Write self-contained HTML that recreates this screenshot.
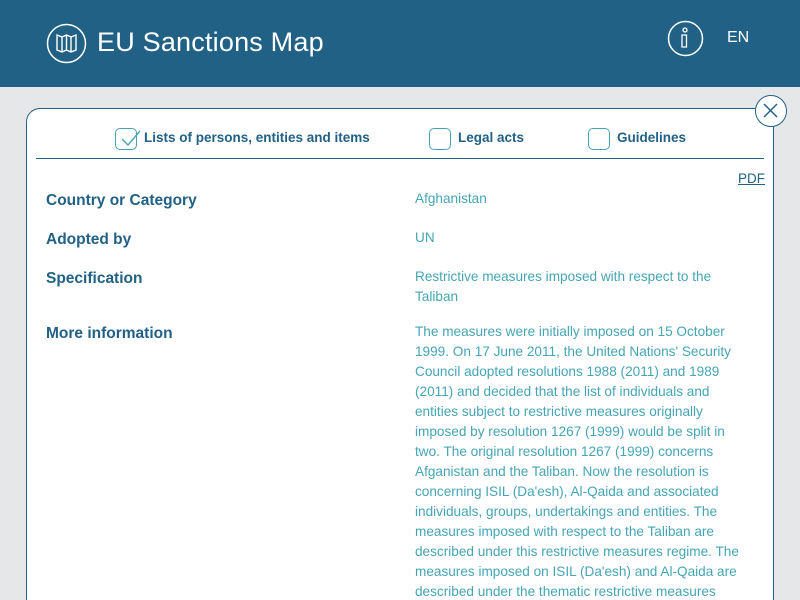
<!DOCTYPE html>
<html><head><style>
*{margin:0;padding:0;box-sizing:border-box}
html,body{width:800px;height:600px;overflow:hidden}
body{background:#e6e7e9;font-family:"Liberation Sans",sans-serif;position:relative}
.hdr{position:absolute;left:0;top:0;width:800px;height:87px;background:#216185}
.title{position:absolute;left:97px;top:27px;color:#fff;font-size:27px;font-weight:300;letter-spacing:0.2px}
.en{position:absolute;left:727px;top:29px;color:#fff;font-size:16px}
.panel{position:absolute;left:26px;top:108px;width:748px;height:520px;background:#fff;border:1.5px solid #216185;border-radius:14px}
.close{position:absolute;left:755px;top:95px;width:32px;height:32px;border-radius:50%;background:#fff;border:1.5px solid #216185}
.tabs{position:absolute;left:36px;top:127px;width:728px;height:32px;border-bottom:1.5px solid #216185}
.tab{position:absolute;top:0;font-size:13.5px;font-weight:bold;color:#216185;line-height:22px}
.cb{position:absolute;top:1px;width:22px;height:22px;border:1.5px solid #45a5b5;border-radius:5px}
.lab{position:absolute;left:46px;font-size:15.5px;color:#216185;font-weight:bold;}
.val{position:absolute;left:415px;width:335px;font-size:13.6px;line-height:20px;color:#45a5b5}
.pdf{position:absolute;left:738px;top:171px;font-size:13.5px;color:#216185;text-decoration:underline}
</style></head><body>
<div class="hdr">
<svg style="position:absolute;left:46px;top:23px" width="41" height="41" viewBox="0 0 41 41"><circle cx="20.5" cy="20.5" r="19" fill="none" stroke="#fff" stroke-width="1.5"/><path d="M11 12 L16 14 L20.5 12 L25 14 L30 12 L30 27 L25 29 L20.5 27 L16 29 L11 27 Z M16 14 V29 M20.5 12 V27 M25 14 V29" fill="none" stroke="#fff" stroke-width="1.4"/></svg>
<div class="title">EU Sanctions Map</div>
<svg style="position:absolute;left:667px;top:20px" width="37" height="37" viewBox="0 0 37 37"><circle cx="18.5" cy="18.5" r="17" fill="none" stroke="#fff" stroke-width="1.5"/><circle cx="18" cy="10" r="2" fill="none" stroke="#fff" stroke-width="1.3"/><path d="M15 15 H19.5 V27 H15 Z" fill="none" stroke="#fff" stroke-width="1.3"/></svg>
<div class="en">EN</div>
</div>
<div class="panel"></div>
<div class="close"><svg width="29" height="29" viewBox="0 0 29 29"><path d="M8 8 L21 21 M21 8 L8 21" stroke="#216185" stroke-width="1.5"/></svg></div>
<div class="tabs">
<div class="cb" style="left:79px"></div><svg style="position:absolute;left:84px;top:2px" width="24" height="20"><path d="M2 10 L8 16 L20 2" fill="none" stroke="#45a5b5" stroke-width="1.4"/></svg>
<div class="tab" style="left:108px">Lists of persons, entities and items</div>
<div class="cb" style="left:393px"></div><div class="tab" style="left:422px">Legal acts</div>
<div class="cb" style="left:552px"></div><div class="tab" style="left:581px">Guidelines</div>
</div>
<div class="pdf">PDF</div>
<div class="lab" style="top:192px">Country or Category</div>
<div class="val" style="top:189px">Afghanistan</div>
<div class="lab" style="top:231px">Adopted by</div>
<div class="val" style="top:228px">UN</div>
<div class="lab" style="top:270px">Specification</div>
<div class="val" style="top:267px">Restrictive measures imposed with respect to the Taliban</div>
<div class="lab" style="top:325px">More information</div>
<div class="val" style="top:322px">The measures were initially imposed on 15 October 1999. On 17 June 2011, the United Nations' Security Council adopted resolutions 1988 (2011) and 1989 (2011) and decided that the list of individuals and entities subject to restrictive measures originally imposed by resolution 1267 (1999) would be split in two. The original resolution 1267 (1999) concerns Afganistan and the Taliban. Now the resolution is concerning ISIL (Da'esh), Al-Qaida and associated individuals, groups, undertakings and entities. The measures imposed with respect to the Taliban are described under this restrictive measures regime. The measures imposed on ISIL (Da'esh) and Al-Qaida are described under the thematic restrictive measures</div>
</body></html>
